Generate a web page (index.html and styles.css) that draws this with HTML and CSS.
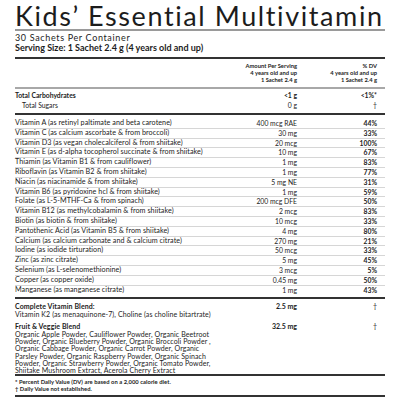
FILE: index.html
```html
<!DOCTYPE html>
<html lang="en">
<head>
  <meta charset="UTF-8">
  <meta name="viewport" content="width=device-width, initial-scale=1.0">
  <title>Kids' Essential Multivitamin</title>
  <link rel="stylesheet" href="styles.css">
</head>
<body>
  <div class="label">
    <h1 class="title">Kids’ Essential Multivitamin</h1>

    <div class="serving">
      <div class="per-container">30 Sachets Per Container</div>
      <div class="serving-size">Serving Size: 1 Sachet 2.4 g (4 years old and up)</div>
    </div>

    <div class="head row">
      <span></span>
      <span class="amt">Amount Per Serving<br>4 years old and up<br>1 Sachet 2.4 g</span>
      <span class="dv">% DV<br>4 years old and up<br>1 Sachet 2.4 g</span>
    </div>

    <div class="carbs">
      <div class="row bold">
        <span>Total Carbohydrates</span>
        <span class="amt">&lt;1 g</span>
        <span class="dv">&lt;1%*</span>
      </div>
      <div class="row">
        <span class="indent">Total Sugars</span>
        <span class="amt">0 g</span>
        <span class="dv">†</span>
      </div>
    </div>

    <div class="nutrients">
      <div class="row item"><span>Vitamin A (as retinyl paltimate and beta carotene)</span><span class="amt">400 mcg RAE</span><span class="dv">44%</span></div>
      <div class="row item"><span>Vitamin C (as calcium ascorbate &amp; from broccoli)</span><span class="amt">30 mg</span><span class="dv">33%</span></div>
      <div class="row item"><span>Vitamin D3 (as vegan cholecalciferol &amp; from shiitake)</span><span class="amt">20 mcg</span><span class="dv">100%</span></div>
      <div class="row item"><span>Vitamin E (as d-alpha tocopherol succinate &amp; from shiitake)</span><span class="amt">10 mg</span><span class="dv">67%</span></div>
      <div class="row item"><span>Thiamin (as Vitamin B1 &amp; from cauliflower)</span><span class="amt">1 mg</span><span class="dv">83%</span></div>
      <div class="row item"><span>Riboflavin (as Vitamin B2 &amp; from shiitake)</span><span class="amt">1 mg</span><span class="dv">77%</span></div>
      <div class="row item"><span>Niacin (as niacinamide &amp; from shiitake)</span><span class="amt">5 mg NE</span><span class="dv">31%</span></div>
      <div class="row item"><span>Vitamin B6 (as pyridoxine hcl &amp; from shiitake)</span><span class="amt">1 mg</span><span class="dv">59%</span></div>
      <div class="row item"><span>Folate (as L-5-MTHF-Ca &amp; from spinach)</span><span class="amt">200 mcg DFE</span><span class="dv">50%</span></div>
      <div class="row item"><span>Vitamin B12 (as methylcobalamin &amp; from shiitake)</span><span class="amt">2 mcg</span><span class="dv">83%</span></div>
      <div class="row item"><span>Biotin (as biotin &amp; from shiitake)</span><span class="amt">10 mcg</span><span class="dv">33%</span></div>
      <div class="row item"><span>Pantothenic Acid (as Vitamin B5 &amp; from shiitake)</span><span class="amt">4 mg</span><span class="dv">80%</span></div>
      <div class="row item"><span>Calcium (as calcium carbonate and &amp; calcium citrate)</span><span class="amt">270 mg</span><span class="dv">21%</span></div>
      <div class="row item"><span>Iodine (as iodide tirturation)</span><span class="amt">50 mcg</span><span class="dv">33%</span></div>
      <div class="row item"><span>Zinc (as zinc citrate)</span><span class="amt">5 mg</span><span class="dv">45%</span></div>
      <div class="row item"><span>Selenium (as L-selenomethionine)</span><span class="amt">3 mcg</span><span class="dv">5%</span></div>
      <div class="row item"><span>Copper (as copper oxide)</span><span class="amt">0.45 mg</span><span class="dv">50%</span></div>
      <div class="row item"><span>Manganese (as manganese citrate)</span><span class="amt">1 mg</span><span class="dv">43%</span></div>
    </div>

    <div class="blends">
      <div class="row blend">
        <div>
          <div class="blend-name">Complete Vitamin Blend:</div>
          <div class="blend-text">Vitamin K2 (as menaquinone-7), Choline (as choline bitartrate)</div>
        </div>
        <span class="amt bold">2.5 mg</span>
        <span class="dv">†</span>
      </div>
      <div class="row blend">
        <div>
          <div class="blend-name">Fruit &amp; Veggie Blend</div>
          <div class="blend-text">Organic Apple Powder, Cauliflower Powder, Organic Beetroot Powder, Organic Blueberry Powder, Organic Broccoli Powder , Organic Cabbage Powder, Organic Carrot Powder, Organic Parsley Powder, Organic Raspberry Powder, Organic Spinach Powder, Organic Strawberry Powder, Organic Tomato Powder, Shiitake Mushroom Extract, Acerola Cherry Extract</div>
        </div>
        <span class="amt bold">32.5 mg</span>
        <span class="dv">†</span>
      </div>
    </div>

    <div class="notes">
      <div>* Percent Daily Value (DV) are based on a 2,000 calorie diet.</div>
      <div>† Daily Value not established.</div>
    </div>
  </div>
</body>
</html>
```

FILE: styles.css
```css
body {
  margin: 0;
  background: #ffffff;
  color: #1c1c1c;
  font-family: Lato, "Noto Sans", sans-serif;
}

.label {
  width: 370px;
  margin: 0 15px;
}

.title {
  margin: 0;
  padding-top: 2px;
  font-size: 27px;
  line-height: 27px;
  font-weight: 400;
  letter-spacing: 1.6px;
  border-bottom: 2px solid #9a9a9a;
}

.serving {
  padding: 2px 0 4px;
  border-bottom: 2px solid #333333;
}

.per-container {
  font-size: 9px;
  line-height: 10px;
  letter-spacing: 0.65px;
}

.serving-size {
  font-size: 9px;
  line-height: 10px;
  font-weight: 700;
}

.row {
  display: grid;
  grid-template-columns: minmax(0, 1fr) 80px 80px;
  padding-right: 8px;
  align-items: start;
}

.amt,
.dv {
  text-align: right;
  white-space: nowrap;
}

.row > span:first-child {
  white-space: nowrap;
}

.head {
  padding: 3px 8px 4px 0;
  font-size: 5.8px;
  line-height: 7px;
  font-weight: 700;
  border-bottom: 2px solid #a8a8a8;
}

.carbs {
  padding: 1px 0 3px;
  border-bottom: 2px solid #333333;
  font-size: 6.8px;
}

.carbs .row {
  line-height: 10px;
}

.bold {
  font-weight: 700;
}

.indent {
  padding-left: 7px;
}

.nutrients {
  padding: 4px 0 3px;
  border-bottom: 2px solid #333333;
  font-size: 7.2px;
  letter-spacing: 0.05px;
}

.item {
  height: 8.8px;
  line-height: 8.8px;
  border-bottom: 1px solid #d6d6d6;
}

.item:last-child {
  border-bottom: none;
}

.item .amt {
  font-size: 6.8px;
  letter-spacing: 0;
}

.item .dv {
  font-size: 6.8px;
  letter-spacing: 0;
  font-weight: 700;
}

.blends {
  padding: 3px 0 0;
  border-bottom: 2px solid #333333;
  font-size: 7px;
}

.blend + .blend {
  margin-top: 4px;
}

.blend-name {
  font-weight: 700;
  line-height: 8.5px;
  letter-spacing: 0.1px;
}

.blend-text {
  width: 202px;
  line-height: 7.3px;
  letter-spacing: 0.1px;
}

.blend .amt,
.blend .dv {
  line-height: 8.5px;
}

.notes {
  padding: 1.5px 0 2.5px;
  border-bottom: 2px solid #333333;
  font-size: 5.8px;
  line-height: 7.3px;
  letter-spacing: 0.05px;
  font-weight: 700;
}
```
